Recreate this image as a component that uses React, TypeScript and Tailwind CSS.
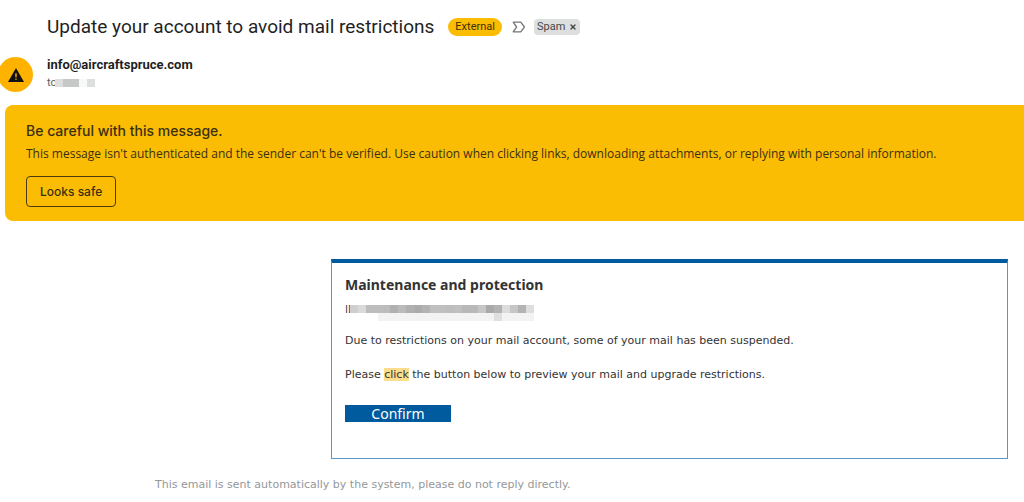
import { useState } from "react";
import { X } from "lucide-react";

const recipientBlocks = [
  "bg-[#dedede]",
  "bg-[#c6c8c8]",
  "bg-[#c8c8c8]",
  "bg-[#f7f8f8]",
  "bg-[#dedede]",
];

const idBlocks = [
  "bg-[#cfcfcf]",
  "bg-[#dadada]",
  "bg-[#bdbdbd]",
  "bg-[#bdbdbd]",
  "bg-[#bcbcbc]",
  "bg-[#b0b0b0]",
  "bg-[#bababa]",
  "bg-[#b0b0b0]",
  "bg-[#aaacac]",
  "bg-[#b3b3b3]",
  "bg-[#c0c0c0]",
  "bg-[#c0c0c0]",
  "bg-[#bdbdbd]",
  "bg-[#c0c0c0]",
  "bg-[#b8b8b8]",
  "bg-[#b9b9b9]",
  "bg-[#c6c6c6]",
  "bg-[#a9a9a9]",
  "bg-[#b3b3b3]",
  "bg-[#dcdcdc]",
  "bg-[#c6c6c6]",
  "bg-[#b3b3b3]",
  "bg-[#dedede]",
];

function ImportanceMarker() {
  return (
    <svg viewBox="0 0 14 12" className="h-3 w-3.5" fill="none" stroke="#747775">
      <path d="M1.2 1.2H8.8L12.4 6L8.8 10.8H1.2L4.6 6Z" strokeWidth="1.3" strokeLinejoin="round" />
    </svg>
  );
}

function SenderAvatar() {
  return (
    <div className="-ml-0.5 flex size-[35px] shrink-0 items-center justify-center rounded-full bg-[#ffb300]">
      <svg viewBox="0 0 16 14" className="h-3.5 w-4">
        <path d="M8 0L16 14H0Z" fill="#111" />
        <path d="M7.3 5.2H8.7V9.2H7.3ZM7.3 10.4H8.7V11.8H7.3Z" fill="#ffb300" />
      </svg>
    </div>
  );
}

function Header() {
  const [isSpam, setIsSpam] = useState(true);

  return (
    <header>
      <div className="flex h-7 items-center pl-[47px]">
        <h1 className="whitespace-nowrap text-[19px] leading-7 text-[#1f1f1f]">
          Update your account to avoid mail restrictions
        </h1>
        <span className="ml-3.5 rounded-full bg-[#fbbc04] px-[7px] text-[11px] leading-[18px] text-[#3c3000]">
          External
        </span>
        <span className="ml-2.5">
          <ImportanceMarker />
        </span>
        {isSpam && (
          <span className="ml-2 flex items-center gap-1 rounded-sm bg-[#dddfde] px-[3px] text-[11px] leading-4 text-[#444746]">
            Spam
            <button aria-label="Remove Spam label" onClick={() => setIsSpam(false)}>
              <X className="size-2" strokeWidth={4} />
            </button>
          </span>
        )}
      </div>

      <div className="mt-4 flex">
        <SenderAvatar />
        <div className="ml-3.5">
          <p className="text-[13px] font-bold leading-4 text-[#1f1f1f]">
            info@aircraftspruce.com
          </p>
          <div className="mt-0.5 flex items-center text-[11px] leading-4 text-[#5e5e5e]">
            to
            <span className="-ml-0.5 flex">
              {recipientBlocks.map((color, i) => (
                <span key={i} className={`h-2 w-2 ${color}`} />
              ))}
            </span>
          </div>
        </div>
      </div>
    </header>
  );
}

function WarningBanner() {
  return (
    <section className="ml-[5px] mt-[13px] rounded-l-lg bg-[#fbbc04] px-[21px] pb-3.5 pt-4 font-['Inter',sans-serif] text-[#3a3010]">
      <h2 className="text-[14px] font-medium leading-5">
        Be careful with this message.
      </h2>
      <p className="mt-[3px] font-['Open_Sans',sans-serif] text-[12px] leading-5">
        This message isn't authenticated and the sender can't be verified. Use
        caution when clicking links, downloading attachments, or replying with
        personal information.
      </p>
      <button className="mt-3 rounded border border-[#4a3c10] px-[13px] text-[12px] font-medium leading-[29px]">
        Looks safe
      </button>
    </section>
  );
}

function MessageBody() {
  return (
    <main className="mt-[38px] font-['DejaVu_Sans',sans-serif]">
      <article className="ml-[331px] mr-4 border border-t-4 border-[#5a96c8] border-t-[#005a9e] px-[13px] pb-9 pt-3 text-[11px] leading-4 text-[#333]">
        <h2 className="font-['Noto_Sans',sans-serif] text-[14px] font-bold leading-5">
          Maintenance and protection
        </h2>
        <div className="mt-1.5 flex h-4 items-center font-['Open_Sans',sans-serif]">
          ID
          <span className="relative -ml-1.5 flex">
            {idBlocks.map((color, i) => (
              <span key={i} className={`h-2 w-2 ${color}`} />
            ))}
            <span className="absolute left-7 right-0 top-2 h-2 bg-[#f3f3f3]" />
            <span className="absolute right-8 top-2 size-2 bg-[#dfdfdf]" />
          </span>
        </div>
        <p className="mt-4">
          Due to restrictions on your mail account, some of your mail has been
          suspended.
        </p>
        <p className="mt-[18px]">
          Please <mark className="bg-[#fbdd8c] text-inherit">click</mark> the
          button below to preview your mail and upgrade restrictions.
        </p>
        <a
          href="#"
          className="mt-[22px] block w-[106px] bg-[#005a9e] text-center font-['Noto_Sans',sans-serif] text-[14px] leading-[17px] text-white"
        >
          Confirm
        </a>
      </article>
      <p className="ml-[155px] mt-[18px] text-[11px] leading-4 text-[#949899]">
        This email is sent automatically by the system, please do not reply
        directly.
      </p>
    </main>
  );
}

export default function App() {
  return (
    <div className="min-h-screen overflow-x-hidden bg-white pt-[13px] font-['Roboto',sans-serif]">
      <Header />
      <WarningBanner />
      <MessageBody />
    </div>
  );
}
